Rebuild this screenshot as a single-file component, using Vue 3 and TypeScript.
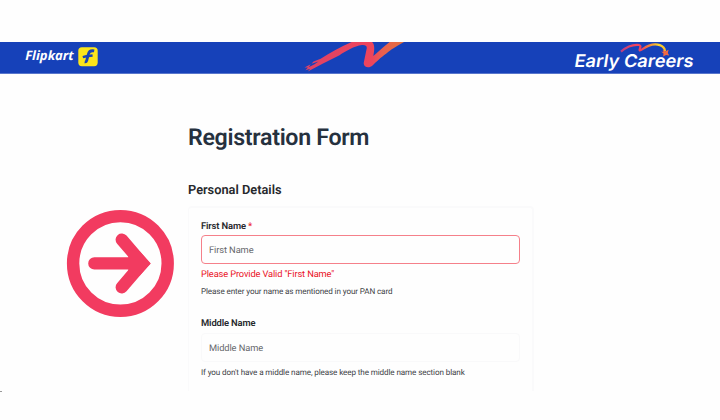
<script setup lang="ts">
interface Field {
  id: string
  label: string
  required: boolean
  error: string
  hint: string
}

const fields: Field[] = [
  {
    id: 'first',
    label: 'First Name',
    required: true,
    error: 'Please Provide Valid "First Name"',
    hint: 'Please enter your name as mentioned in your PAN card',
  },
  {
    id: 'middle',
    label: 'Middle Name',
    required: false,
    error: '',
    hint: "If you don't have a middle name, please keep the middle name section blank",
  },
]
</script>

<template>
  <div class="page">
    <header class="banner">
      <svg class="brand" width="80" height="32" viewBox="0 0 80 32">
        <text class="brand-name" x="0.2" y="18.2" textLength="48.5" lengthAdjust="spacingAndGlyphs">Flipkart</text>
        <rect x="53.3" y="5.2" width="19.4" height="19" rx="3.6" fill="#fbe51b" />
        <path d="M69.2 8.9C65.6 8.2 64 9.6 63.4 12L61.7 18.6C61.4 19.7 60.7 20.1 59.7 19.9" fill="none" stroke="#1843b5" stroke-width="2.8" />
        <path d="M57.8 15.1L61.3 14.2L67.6 13.6" fill="none" stroke="#1843b5" stroke-width="2.5" />
      </svg>
      <svg class="ribbon" width="112" height="32" viewBox="0 0 112 32">
        <defs>
          <linearGradient id="ribbonFill" gradientUnits="userSpaceOnUse" x1="0" y1="0" x2="102" y2="0">
            <stop offset="0" stop-color="#df4266" />
            <stop offset="0.68" stop-color="#ed455c" />
            <stop offset="0.78" stop-color="#e8604f" />
            <stop offset="1" stop-color="#e4713c" />
          </linearGradient>
        </defs>
        <path d="M1.5 25.4L7.8 22.2L5.6 25.2L11.5 22.2L15.5 19.5L8.5 21.8L10.5 19.6L17.7 16.8C27 11 38 4.5 51 -1L67.5 -1C71.5 1 72 5 70.3 14C75 10 81 4 88 -1L103 -1C95 3 87.5 8 83.7 11.2C77 16 73 20 69.5 23.5C66.5 26.5 60.5 25.8 60.7 21L63.8 6C63.8 3.4 62 2.8 59 3C51 4 43 9 36.5 13.2L20 21.5L4.8 29.5L7.2 26.8L2.5 28.2L5 25.5Z" fill="url(#ribbonFill)" />
      </svg>
      <svg class="careers" width="126" height="32" viewBox="0 0 126 32">
        <defs>
          <linearGradient id="swooshFill" gradientUnits="userSpaceOnUse" x1="48" y1="0" x2="94" y2="0">
            <stop offset="0" stop-color="#b63f86" />
            <stop offset="0.25" stop-color="#ef4360" />
            <stop offset="0.45" stop-color="#ef4360" />
            <stop offset="0.62" stop-color="#f28636" />
            <stop offset="0.82" stop-color="#fbd52c" />
            <stop offset="1" stop-color="#f3b72c" />
          </linearGradient>
        </defs>
        <path d="M48 9.6C54 4.5 61 2.5 66 3C69.5 4 65.5 7.3 66.7 8.4C68 9 71 5.4 76 3.6C84 .7 91.5 3.5 92 9" fill="none" stroke="url(#swooshFill)" stroke-width="2.2" />
        <text class="careers-name" transform="translate(0.8 24.6) skewX(-9)" textLength="119" lengthAdjust="spacingAndGlyphs">Early Careers</text>
        <path d="M89.6 7.8L92.4 9.2L95.6 7.8L94.8 11L96.2 13.4L93 13L90.2 14.6L90.5 11.6L88 9.6L90.4 9.9Z" fill="#f26a42" />
      </svg>
    </header>

    <div class="content">
      <aside class="pointer">
        <svg width="109" height="109" viewBox="0 0 109 109">
          <g transform="translate(0.4 0.4)">
            <circle cx="54" cy="54" r="47.3" fill="none" stroke="#f23b60" stroke-width="12.4" />
            <path d="M28 54H73M55.4 30.2L75.8 54L55.4 77.8" fill="none" stroke="#f23b60" stroke-width="12.4" stroke-linecap="round" />
            <path d="M62 41L73.4 42L84.4 54L73.4 66L62 67Z" fill="#f23b60" />
          </g>
        </svg>
      </aside>

      <main class="form">
        <h1>Registration Form</h1>
        <h2>Personal Details</h2>
        <section class="card">
          <div v-for="field in fields" :key="field.id" class="field" :class="field.id">
            <label :for="field.id"><span>{{ field.label }}</span><span v-if="field.required" class="star"> *</span></label>
            <input :id="field.id" type="text" :placeholder="field.label" :class="{ invalid: field.error }" />
            <p v-if="field.error" class="error">{{ field.error }}</p>
            <p class="hint">{{ field.hint }}</p>
          </div>
        </section>
      </main>
    </div>
    <footer class="tick"></footer>
  </div>
</template>

<style>
body {
  background: #fefefe;
}
</style>

<style scoped>
.page {
  box-sizing: border-box;
  width: 720px;
  height: 420px;
  padding-top: 42px;
  overflow: hidden;
  background: #fefefe;
  font-family: Roboto, "Liberation Sans", sans-serif;
  text-rendering: geometricPrecision;
  color: #26282c;
}
.banner {
  box-sizing: border-box;
  display: flex;
  height: 32px;
  padding-left: 25px;
  background: #1641b9;
  border-bottom: 1px solid #5876cc;
}
.banner svg {
  flex: none;
}
.ribbon {
  margin-left: 198px;
}
.careers {
  margin-left: 158px;
}
.brand-name {
  font: italic 700 13px "Open Sans", sans-serif;
  fill: #fff;
}
.careers-name {
  font: 600 17.5px Inter, sans-serif;
  fill: #fff;
}
.content {
  display: grid;
  grid-template-columns: 122px 346px;
  padding-left: 66px;
  height: 316px;
}
.pointer {
  padding-top: 135px;
}
.pointer svg {
  display: block;
}
.form {
  padding-top: 47px;
}
h1 {
  margin: 0;
  font-size: 23.2px;
  line-height: 33px;
  font-weight: 600;
  letter-spacing: -0.3px;
  color: #26313e;
  white-space: nowrap;
}
h2 {
  margin: 28px 0 0;
  font-size: 12.8px;
  line-height: 18px;
  font-weight: 600;
  white-space: nowrap;
}
.card {
  box-sizing: border-box;
  width: 346px;
  height: 185px;
  margin-top: 6px;
  padding: 12px 13px 0 12px;
  border: 1px solid #fafafb;
  border-width: 2px 2px 0 1px;
  border-radius: 4px 4px 0 0;
}
.field + .field {
  margin-top: 20px;
}
label {
  display: block;
  font-size: 9.4px;
  line-height: 13px;
  font-weight: 600;
  letter-spacing: -0.13px;
  white-space: pre;
}
.star {
  color: #ec2432;
}
input {
  box-sizing: border-box;
  display: block;
  width: 319px;
  height: 29px;
  margin: 2px 0 0;
  padding: 1px 7px 0;
  border: 1px solid #f9f9fa;
  border-radius: 4px;
  outline: none;
  background: #fefefe;
  font: 9.3px Roboto, sans-serif;
  letter-spacing: -0.1px;
  text-rendering: geometricPrecision;
}
.middle input {
  margin-top: 3px;
}
input::placeholder {
  color: #66686c;
  opacity: 1;
}
input.invalid {
  border-color: #f5808a;
}
p {
  margin: 0;
  white-space: nowrap;
}
.error {
  padding-top: 5px;
  font-size: 9.3px;
  line-height: 12px;
  letter-spacing: -0.14px;
  color: #ea121e;
}
.hint {
  padding-top: 4px;
  font-size: 8.1px;
  line-height: 12px;
  letter-spacing: -0.11px;
  color: #404246;
}
.tick {
  width: 2px;
  height: 1px;
  margin-top: 1px;
  background: #999;
}
</style>
